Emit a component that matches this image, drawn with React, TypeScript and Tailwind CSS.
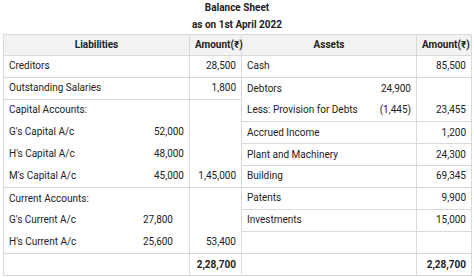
const line = 'flex h-[21.8px] items-center'

function Block({ rows, pr }: { rows: [string, string][]; pr: string }) {
  return (
    <div className="flex flex-col">
      {rows.map(([a, b], i) => (
        <div key={i} className={`${line} justify-between`}>
          <span>{a}</span>
          <span className={pr}>{b}</span>
        </div>
      ))}
    </div>
  )
}

export default function App() {
  const td = 'border border-[#d9d9d9] px-[5px] h-[21.8px] p-0 leading-none'
  const num = 'text-right'
  return (
    <div
      className="min-h-[277px] w-[474px] bg-white px-[3px] text-[10px] text-[#222]"
      style={{ fontFamily: 'Roboto, "Noto Sans", sans-serif' }}
    >
      <div className="text-center font-bold">
        <div className="flex h-[14px] items-center justify-center">Balance Sheet</div>
        <div className="flex h-[20px] items-center justify-center">as on 1st April 2022</div>
      </div>
      <table className="w-[468px] table-fixed border-collapse border border-[#d0d0d0]">
        <colgroup>
          <col className="w-[186px]" />
          <col className="w-[52px]" />
          <col className="w-[175px]" />
          <col className="w-[55px]" />
        </colgroup>
        <thead>
          <tr className="bg-[#f2f2f2] font-bold">
            <th className={`${td} h-[21px] text-center`}>Liabilities</th>
            <th className={`${td} h-[21px] text-right`}>Amount(₹)</th>
            <th className={`${td} h-[21px] text-center`}>Assets</th>
            <th className={`${td} h-[21px] text-right`}>Amount(₹)</th>
          </tr>
        </thead>
        <tbody>
          <tr>
            <td className={td}>Creditors</td>
            <td className={`${td} ${num}`}>28,500</td>
            <td className={td}>Cash</td>
            <td className={`${td} ${num}`}>85,500</td>
          </tr>
          <tr>
            <td className={td}>Outstanding Salaries</td>
            <td className={`${td} ${num}`}>1,800</td>
            <td rowSpan={2} className={`${td} align-top`}>
              <Block
                pr="pr-0"
                rows={[
                  ['Debtors', '24,900'],
                  ['Less: Provision for Debts', '(1,445)'],
                ]}
              />
            </td>
            <td rowSpan={2} className={`${td} ${num} align-bottom`}>
              <div className={`${line} justify-end`}>23,455</div>
            </td>
          </tr>
          <tr>
            <td rowSpan={4} className={`${td} align-top`}>
              <Block
                pr="pr-0"
                rows={[
                  ['Capital Accounts:', ''],
                  ["G's Capital A/c", '52,000'],
                  ["H's Capital A/c", '48,000'],
                  ["M's Capital A/c", '45,000'],
                ]}
              />
            </td>
            <td rowSpan={4} className={`${td} ${num} align-bottom`}>
              <div className={`${line} justify-end`}>1,45,000</div>
            </td>
          </tr>
          <tr>
            <td className={td}>Accrued Income</td>
            <td className={`${td} ${num}`}>1,200</td>
          </tr>
          <tr>
            <td className={td}>Plant and Machinery</td>
            <td className={`${td} ${num}`}>24,300</td>
          </tr>
          <tr>
            <td className={td}>Building</td>
            <td className={`${td} ${num}`}>69,345</td>
          </tr>
          <tr>
            <td rowSpan={3} className={`${td} align-top`}>
              <Block
                pr="pr-[11px]"
                rows={[
                  ['Current Accounts:', ''],
                  ["G's Current A/c", '27,800'],
                  ["H's Current A/c", '25,600'],
                ]}
              />
            </td>
            <td rowSpan={3} className={`${td} ${num} align-bottom`}>
              <div className={`${line} justify-end`}>53,400</div>
            </td>
            <td className={td}>Patents</td>
            <td className={`${td} ${num}`}>9,900</td>
          </tr>
          <tr>
            <td className={td}>Investments</td>
            <td className={`${td} ${num}`}>15,000</td>
          </tr>
          <tr>
            <td className={td}></td>
            <td className={td}></td>
          </tr>
          <tr className="font-bold">
            <td className={td}></td>
            <td className={`${td} ${num}`}>2,28,700</td>
            <td className={td}></td>
            <td className={`${td} ${num}`}>2,28,700</td>
          </tr>
        </tbody>
      </table>
    </div>
  )
}
